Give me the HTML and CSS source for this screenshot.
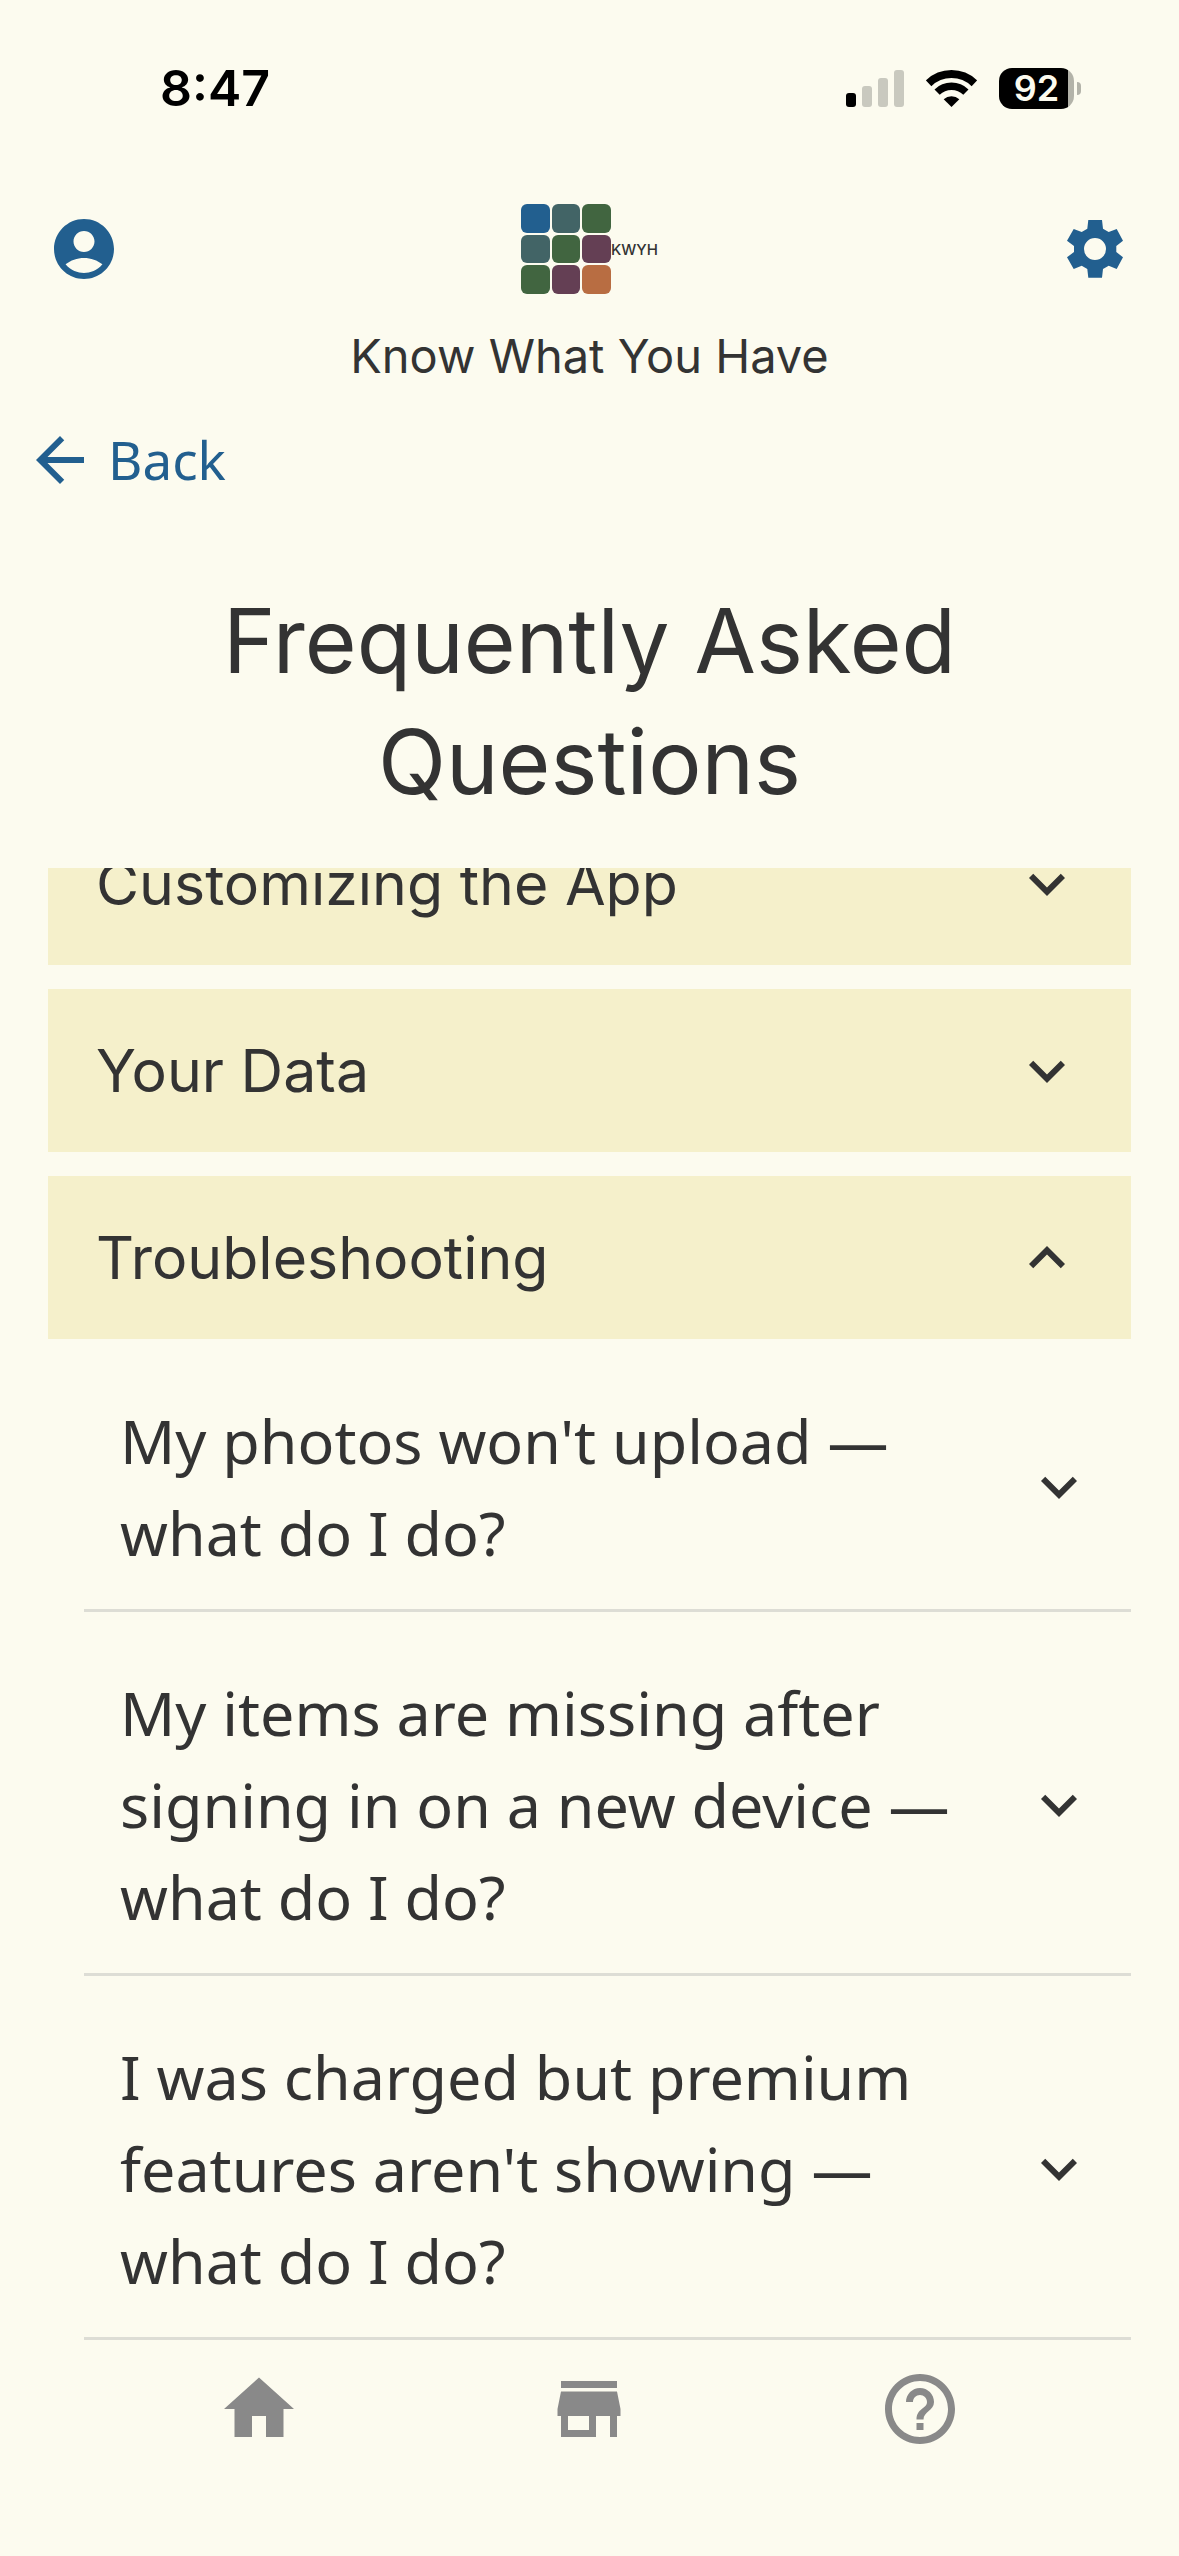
FILE: index.html
```html
<!DOCTYPE html>
<html lang="en">
<head>
    <meta charset="UTF-8">
    <title>Know What You Have - FAQ</title>
    <meta name="viewport" content="width=device-width, initial-scale=1.0">
    <link rel="stylesheet" href="styles.css">
</head>
<body>
    <div class="status-bar">
        <span class="time">8:47</span>
        <div class="status-icons">
            <svg class="signal" viewBox="0 0 58 37" aria-hidden="true">
                <rect x="0" y="23" width="10" height="14" rx="3"/>
                <g fill="#c9c9bf">
                    <rect x="16" y="16" width="10" height="21" rx="3"/>
                    <rect x="32" y="8" width="10" height="29" rx="3"/>
                    <rect x="48" y="0" width="10" height="37" rx="3"/>
                </g>
            </svg>
            <svg class="wifi" viewBox="0 0 51 37" aria-hidden="true">
                <path d="M2.600 13.300A33 33 0 0 1 48.400 13.300" fill="none" stroke="#000" stroke-width="8"/>
                <path d="M11.100 22.100A20.700 20.700 0 0 1 39.900 22.100" fill="none" stroke="#000" stroke-width="7.500"/>
                <path d="M25.500 37L17.700 29.200A11.500 11.500 0 0 1 33.300 29.200Z"/>
            </svg>
            <div class="battery">
                <span class="battery-level">92</span>
            </div>
        </div>
    </div>

    <header class="header">
        <button class="icon-button" aria-label="Account">
            <svg viewBox="0 0 24 24"><path d="M12 2C6.480 2 2 6.480 2 12s4.480 10 10 10 10-4.480 10-10S17.520 2 12 2zm0 4c1.930 0 3.500 1.570 3.500 3.500S13.930 13 12 13s-3.500-1.570-3.500-3.500S10.070 6 12 6zm0 14c-2.030 0-4.430-.82-6.140-2.880C7.550 15.800 9.680 15 12 15s4.450.8 6.140 2.120C16.430 19.180 14.030 20 12 20z"/></svg>
        </button>
        <div class="logo">
            <svg viewBox="0 0 90 90" aria-hidden="true">
                <rect x="0" y="0" width="29" height="29" rx="6" fill="#225f8f"/>
                <rect x="31" y="0" width="28" height="29" rx="6" fill="#426466"/>
                <rect x="61" y="0" width="29" height="29" rx="6" fill="#416540"/>
                <rect x="0" y="31" width="29" height="28" rx="6" fill="#426466"/>
                <rect x="31" y="31" width="28" height="28" rx="6" fill="#416540"/>
                <rect x="61" y="31" width="29" height="28" rx="6" fill="#643f54"/>
                <rect x="0" y="61" width="29" height="29" rx="6" fill="#416540"/>
                <rect x="31" y="61" width="28" height="29" rx="6" fill="#643f54"/>
                <rect x="61" y="61" width="29" height="29" rx="6" fill="#b86d42"/>
            </svg>
            <span>KWYH</span>
        </div>
        <button class="icon-button" aria-label="Settings">
            <svg viewBox="0 0 72 72"><path fill-rule="evenodd" d="M29.300 7H43L44 15.700 49.700 19 57.700 16 64 27.700 57.300 33V39L64 44.300 57.700 56 49.700 52.700 44 56 43 64.700H29.300L28.300 56 22.700 52.700 14.700 56 8 44.300 15 39V33L8 27.700 14.700 16 22.700 19 28.300 15.700ZM25 36a11 11 0 1 0 22 0a11 11 0 1 0-22 0Z"/></svg>
        </button>
    </header>
    <p class="tagline">Know What You Have</p>

    <a class="back" href="#">
        <svg viewBox="0 0 24 24" aria-hidden="true"><path d="M20 11H7.830l5.590-5.590L12 4l-8 8 8 8 1.410-1.410L7.830 13H20v-2z"/></svg>
        Back
    </a>

    <h1>Frequently Asked Questions</h1>

    <main class="faq">
        <button class="section" aria-expanded="false">
            <span>Customizing the App</span>
            <svg viewBox="0 0 24 24"><path d="M16.590 8.590L12 13.170 7.410 8.590 6 10l6 6 6-6z"/></svg>
        </button>
        <button class="section" aria-expanded="false">
            <span>Your Data</span>
            <svg viewBox="0 0 24 24"><path d="M16.590 8.590L12 13.170 7.410 8.590 6 10l6 6 6-6z"/></svg>
        </button>
        <button class="section" aria-expanded="true">
            <span>Troubleshooting</span>
            <svg viewBox="0 0 24 24"><path d="M12 8l-6 6 1.410 1.410L12 10.830l4.590 4.580L18 14z"/></svg>
        </button>
        <div class="questions">
            <button class="question" aria-expanded="false">
                <span>My photos won't upload — what do I do?</span>
                <svg viewBox="0 0 24 24"><path d="M16.590 8.590L12 13.170 7.410 8.590 6 10l6 6 6-6z"/></svg>
            </button>
            <button class="question" aria-expanded="false">
                <span>My items are missing after signing in on a new device — what do I do?</span>
                <svg viewBox="0 0 24 24"><path d="M16.590 8.590L12 13.170 7.410 8.590 6 10l6 6 6-6z"/></svg>
            </button>
            <button class="question" aria-expanded="false">
                <span>I was charged but premium features aren't showing — what do I do?</span>
                <svg viewBox="0 0 24 24"><path d="M16.590 8.590L12 13.170 7.410 8.590 6 10l6 6 6-6z"/></svg>
            </button>
        </div>
    </main>

    <nav class="tab-bar">
        <a href="#" aria-label="Home">
            <svg viewBox="0 0 24 24"><path d="M10 20v-6h4v6h5v-8h3L12 3 2 12h3v8z"/></svg>
        </a>
        <a href="#" aria-label="Store">
            <svg viewBox="0 0 24 24"><path d="M20 4H4v2h16V4zm1 10v-2l-1-5H4l-1 5v2h1v6h10v-6h4v6h2v-6h1zm-9 4H6v-4h6v4z"/></svg>
        </a>
        <a href="#" aria-label="Help">
            <svg viewBox="0 0 24 24"><path d="M11 18h2v-2h-2v2zm1-16C6.480 2 2 6.480 2 12s4.480 10 10 10 10-4.480 10-10S17.520 2 12 2zm0 18c-4.410 0-8-3.590-8-8s3.590-8 8-8 8 3.590 8 8-3.590 8-8 8zm0-14c-2.210 0-4 1.790-4 4h2c0-1.100.9-2 2-2s2 .9 2 2c0 2-3 1.750-3 5h2c0-2.250 3-2.500 3-5 0-2.210-1.790-4-4-4z"/></svg>
        </a>
    </nav>
</body>
</html>
```
FILE: styles.css
```css
* {
    box-sizing: border-box;
}
body {
    display: flex;
    flex-direction: column;
    height: 100vh;
    margin: 0;
    font-family: "Noto Sans", sans-serif;
    color: #333;
    background: #fcfbef;
}
svg {
    display: block;
    flex: none;
    fill: currentColor;
}
button {
    border: 0;
    padding: 0;
    background: none;
    font: inherit;
    color: inherit;
    text-align: left;
    cursor: pointer;
}
a {
    color: inherit;
    text-decoration: none;
}
.status-bar {
    display: flex;
    justify-content: space-between;
    align-items: center;
    padding: 56px 105px 0 160px;
    font-family: Inter, sans-serif;
    color: #000;
}
.time {
    font-size: 50px;
    line-height: 64px;
    font-weight: 600;
}
.status-icons {
    display: flex;
    align-items: center;
    gap: 22px;
}
.signal {
    width: 58px;
    height: 37px;
}
.wifi {
    width: 51px;
    height: 37px;
}
.battery {
    position: relative;
    width: 75px;
    height: 41px;
    border-radius: 13px;
    background: linear-gradient(to right, #000 92%, #b3b3a9 92%);
}
.battery::after {
    content: '';
    position: absolute;
    top: 14px;
    right: -7px;
    width: 4px;
    height: 13px;
    border-radius: 0 4px 4px 0;
    background: #b3b3a9;
}
.battery-level {
    display: block;
    font-size: 36px;
    line-height: 41px;
    font-weight: 600;
    text-align: center;
    color: #fcfbef;
}
.header {
    display: flex;
    justify-content: space-between;
    align-items: center;
    padding: 84px 48px 0;
}
.icon-button {
    color: #225f8f;
}
.icon-button svg {
    width: 72px;
    height: 72px;
}
.logo {
    display: flex;
    align-items: center;
    font-family: Inter, sans-serif;
    font-size: 15px;
    font-weight: 500;
}
.logo svg {
    width: 90px;
    height: 90px;
}
.tagline {
    margin: 32px 0 0;
    font-family: Inter, sans-serif;
    font-size: 47px;
    line-height: 60px;
    text-align: center;
}
.back {
    display: flex;
    align-items: center;
    align-self: flex-start;
    gap: 12px;
    margin-top: 38px;
    padding-left: 24px;
    font-size: 53px;
    line-height: 72px;
    color: #225f8f;
}
.back svg {
    width: 72px;
    height: 72px;
}
h1 {
    margin: 84px 48px 46px;
    font-family: Inter, sans-serif;
    font-size: 89px;
    line-height: 121px;
    font-weight: 400;
    text-align: center;
}
.faq {
    display: flex;
    flex: 1;
    flex-direction: column;
    min-height: 0;
    padding: 0 48px;
    overflow: hidden;
}
.section {
    display: flex;
    flex: none;
    justify-content: space-between;
    align-items: center;
    margin-bottom: 24px;
    padding: 45px 48px;
    font-family: Inter, sans-serif;
    font-size: 59px;
    line-height: 73px;
    background: #f5f0cb;
}
/* list is scrolled part of the way through its first section */
.section:first-child {
    margin-top: -66px;
}
.section svg,
.question svg {
    width: 72px;
    height: 72px;
}
.section[aria-expanded="true"] {
    margin-bottom: 0;
}
.questions {
    padding: 1px 0 0 36px;
}
.question {
    display: flex;
    justify-content: space-between;
    align-items: center;
    gap: 36px;
    width: 100%;
    padding: 55px 36px 30px;
    border-bottom: 3px solid #ddddd5;
    font-size: 61px;
    line-height: 92px;
}
.tab-bar {
    display: flex;
    padding: 27px 94px 105px;
    color: #898989;
}
.tab-bar a {
    display: flex;
    flex: 1;
    justify-content: center;
}
.tab-bar svg {
    width: 84px;
    height: 84px;
}
```
